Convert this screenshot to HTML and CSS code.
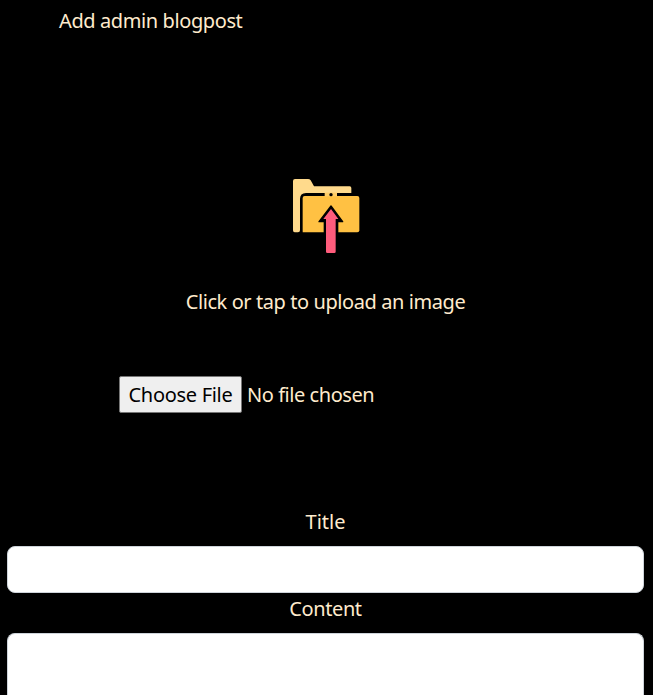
FILE: index.html
```html
<!DOCTYPE html>
<html lang="en">
<head>
<meta charset="utf-8">
<title>Add admin blogpost</title>
<link rel="stylesheet" href="styles.css">
</head>
<body>
<header class="heading"><span class="t-heading">Add admin blogpost</span></header>
<form class="form">
  <label class="upload" for="image">
    <svg class="upload-icon" viewBox="0 0 285 300" aria-hidden="true">
      <path fill="#ffda8c" d="M39 48Q39 42 45 42H84Q89 42 92 46L102 64H209Q214 64 214 69V84H78Q60 84 60 102V196Q60 202 54 202H44Q39 202 39 196Z"/>
      <path fill="#ffc143" d="M68 99Q68 93 74 93H232Q238 93 238 99V196Q238 202 232 202H68Z"/>
      <path fill="#ffcd67" d="M134 83H171V94H134Z"/>
      <circle fill="#000" cx="153" cy="89" r="5"/>
      <path fill="#000" stroke="#000" stroke-width="4" stroke-linejoin="round" d="M153 123L188 170H173V203H133V170H117Z"/>
      <path fill="#ff5c7c" d="M153 132L175 162H167V260Q167 264 163 264H142Q138 264 138 260V162H130Z"/>
    </svg>
    <span class="t-upload">Click or tap to upload an image</span>
  </label>
  <label class="file-picker">
    <input class="file-input" id="image" type="file">
    <span class="file-button">Choose File</span>
    <span class="t-status">No file chosen</span>
  </label>
  <label class="field-label" for="title">Title</label>
  <input class="field" id="title" type="text">
  <label class="field-label content-label" for="content"><span class="t-content">Content</span></label>
  <textarea class="field content-field" id="content"></textarea>
</form>
</body>
</html>
```
FILE: styles.css
```css
* { box-sizing: border-box; }
body {
  margin: 0;
  height: 695px;
  overflow: hidden;
  background: #000;
  color: #ffebcd;
  font: 20px/30px "Noto Sans", "Open Sans", sans-serif;
  white-space: nowrap;
}
.heading { padding: 6px 0 0 59px; }
.t-heading { letter-spacing: -0.4px; }
.form { display: flex; flex-direction: column; height: 659px; padding: 129px 9px 0 7px; }
.upload { display: flex; flex-direction: column; align-items: center; }
.upload-icon { width: 95px; height: 100px; margin-left: 4px; }
.t-upload { margin-top: 22px; letter-spacing: -0.42px; }
.file-picker { display: flex; align-items: center; gap: 5px; margin: 59px 0 0 112px; }
.file-input { display: none; }
.file-button {
  width: 123px;
  height: 37px;
  display: flex;
  align-items: center;
  justify-content: center;
  background: #efefef;
  border: 1px solid #767676;
  border-radius: 2px;
  color: #000;
  letter-spacing: -0.3px;
}
.t-status { letter-spacing: -0.45px; }
.field-label { text-align: center; margin-top: 94px; }
.content-label { margin-top: 1px; }
.t-content { letter-spacing: -0.4px; }
.field {
  width: 100%;
  height: 47px;
  margin: 9px 0 0;
  padding: 6px 12px;
  border: 1px solid #ced4da;
  border-radius: 8px;
  background: #fff;
  font: inherit;
  outline: none;
}
.content-field {
  flex: 1;
  height: auto;
  min-height: 0;
  border-bottom: 0;
  border-radius: 8px 8px 0 0;
  resize: none;
}
```
